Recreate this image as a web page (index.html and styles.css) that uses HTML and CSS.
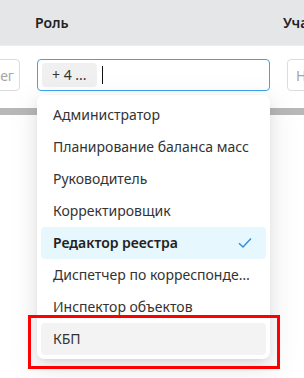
FILE: index.html
```html
<!DOCTYPE html>
<html lang="ru">
<head>
  <meta charset="UTF-8">
  <title>Роли</title>
  <link rel="stylesheet" href="styles.css">
</head>
<body>
  <div class="grid">
    <div class="head-row">
      <div class="th th-role">Роль</div>
      <div class="th">Участок</div>
    </div>

    <div class="body-row">
      <div class="input input-left"><span class="ph">Выбрать коллег</span></div>
      <div class="input input-role">
        <span class="tag">+ 4 ...</span>
        <span class="caret"></span>
      </div>
      <div class="input input-right"><span class="ph">Не выбрано</span></div>
    </div>

    <div class="scroll">
      <div class="scroll-bar"></div>
    </div>
  </div>

  <ul class="dropdown">
    <li class="option">Администратор</li>
    <li class="option">Планирование баланса масс</li>
    <li class="option">Руководитель</li>
    <li class="option">Корректировщик</li>
    <li class="option selected">
      <span>Редактор реестра</span>
      <svg class="check" width="14" height="12" viewBox="0 0 14 12">
        <path d="M1 6.2 L5 10 L13 1.5" fill="none" stroke="#2f8fdc" stroke-width="1.5"/>
      </svg>
    </li>
    <li class="option">Диспетчер по корреспонденции</li>
    <li class="option">Инспектор объектов</li>
    <li class="option hover">КБП</li>
  </ul>

  <div class="mark"></div>
</body>
</html>
```

FILE: styles.css
```css
body {
  margin: 0;
  font-family: "Noto Sans", "Open Sans", sans-serif;
  font-size: 14px;
  color: #333;
  background: #fff;
  overflow: hidden;
}

.grid {
  width: 304px;
  overflow: hidden;
}

.head-row {
  display: flex;
  height: 45px;
  align-items: center;
  background-color: #e5e6e8;
  padding-left: 35px;
  border-bottom: 1px solid #eceef0;
}

.th {
  font-weight: 600;
  color: #222;
  white-space: nowrap;
}

.th-role {
  width: 248px;
  flex: none;
}

.body-row {
  display: flex;
  gap: 17px;
  padding-top: 13px;
  box-sizing: border-box;
  height: 62px;
}

.input {
  flex: none;
  height: 32px;
  box-sizing: border-box;
  border: 1px solid #dcdcdc;
  border-radius: 4px;
  background: #fff;
  display: flex;
  align-items: center;
  overflow: hidden;
  white-space: nowrap;
}

.input-left {
  width: 60px;
  margin-left: -40px;
  justify-content: flex-end;
  padding-right: 5px;
}

.input-right {
  width: 80px;
  padding-left: 8px;
}

.ph {
  color: #a6a6a6;
}

.input-role {
  width: 233px;
  border-color: #3ea3ea;
  padding-left: 4px;
  gap: 5px;
}

.tag {
  background: #f0f0f0;
  border-radius: 4px;
  height: 24px;
  line-height: 24px;
  padding: 0 10px;
  color: #333;
}

.caret {
  width: 1px;
  height: 18px;
  background: #111;
}

.scroll {
  height: 10px;
}

.scroll-bar {
  height: 7px;
  background: #b8b8b8;
}

.dropdown {
  position: absolute;
  left: 37px;
  top: 95px;
  width: 233px;
  box-sizing: border-box;
  margin: 0;
  padding: 4px;
  list-style: none;
  background: #fff;
  border-radius: 7px;
  box-shadow: 0 3px 6px -4px rgba(0,0,0,0.12), 0 6px 16px 0 rgba(0,0,0,0.08), 0 9px 28px 8px rgba(0,0,0,0.05);
}

.option {
  height: 32px;
  line-height: 32px;
  padding: 0 12px;
  border-radius: 4px;
  white-space: nowrap;
  overflow: hidden;
  text-overflow: ellipsis;
}

.option.selected {
  display: flex;
  align-items: center;
  justify-content: space-between;
  background: #e6f7fd;
  font-weight: 600;
  color: #222;
}

.check {
  margin-right: 2px;
}

.option.hover {
  background: #f3f3f3;
}

.mark {
  position: absolute;
  left: 28px;
  top: 315px;
  width: 252px;
  height: 54px;
  box-sizing: border-box;
  border: 3px solid #ff0000;
}
```
